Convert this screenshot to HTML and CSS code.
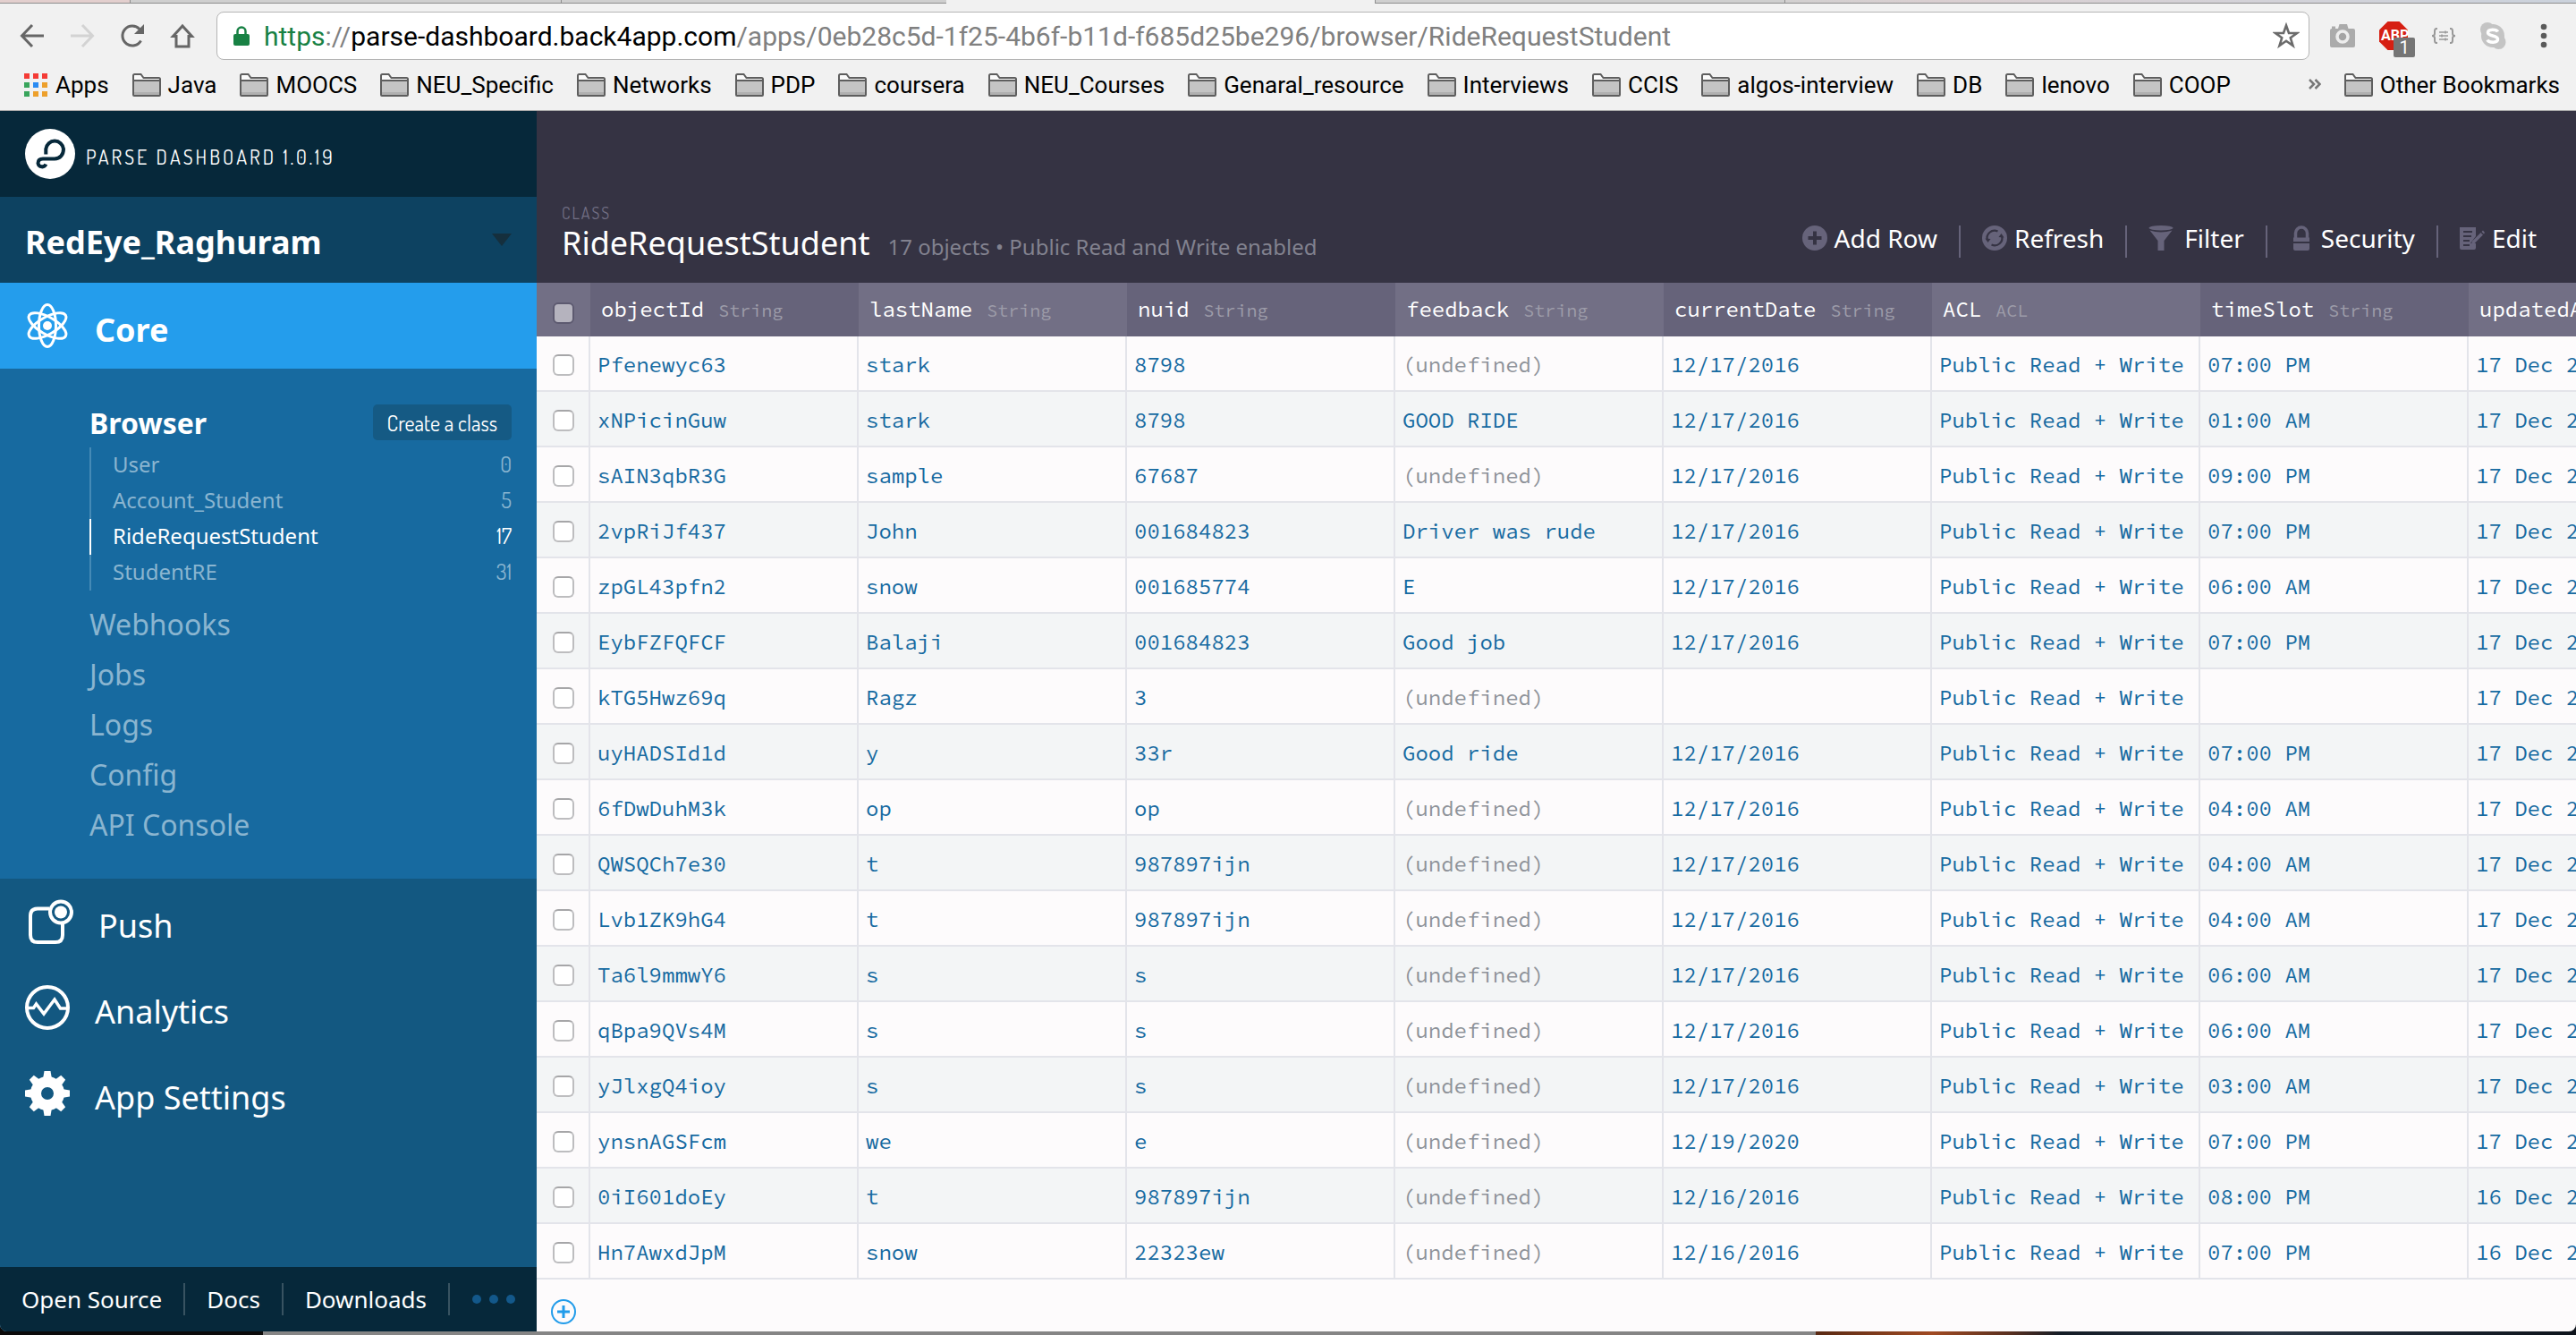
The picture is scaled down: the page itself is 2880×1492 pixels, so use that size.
FILE: index.html
```html
<!DOCTYPE html>
<html lang="en">
<head>
<meta charset="utf-8">
<title>Parse Dashboard</title>
<link rel="stylesheet" href="styles.css">
</head>
<body>
<svg width="0" height="0" class="defs" aria-hidden="true">
  <symbol id="folder" viewBox="0 0 32 26">
    <path d="M1 24V2.500Q1 1 2.500 1H9.500L12.500 5H29.500Q31 5 31 6.500V24Q31 25 30 25H2Q1 25 1 24Z" fill="#fafafa" stroke="#5e5e5e" stroke-width="2"/>
    <path d="M2 9H30V24H2Z" fill="#c4c4c4"/><path d="M2 21H30V24H2Z" fill="#b0b0b0"/>
    <path d="M1 8H31" stroke="#5e5e5e" stroke-width="2"/>
  </symbol>
</svg>
<div class="desktop">
<div class="window">
  <div class="tabs"><span class="tab-glass"></span><span class="tab"></span><span class="tab tab-second"></span><span class="tab-active"></span><span class="tab tab-last"></span><span class="tab-glass tab-rest"></span></div>
  <header class="chrome">
    <div class="toolbar">
      <div class="nav">
        <button class="icon-btn" aria-label="Back"><svg width="28" height="28" viewBox="0 0 28 28" fill="none" stroke="#666" stroke-width="3"><path d="M27 14H3M14 2L2.500 14L14 26"/></svg></button>
        <button class="icon-btn" aria-label="Forward"><svg width="28" height="28" viewBox="0 0 28 28" fill="none" stroke="#d3d3d3" stroke-width="3"><path d="M1 14H25M14 2L25.500 14L14 26"/></svg></button>
        <button class="icon-btn" aria-label="Reload"><svg width="28" height="28" viewBox="0 0 28 28"><path d="M23.500 19.500A11 11 0 1 1 22 6.500" fill="none" stroke="#666" stroke-width="3"/><path d="M27 1V12H16Z" fill="#666"/></svg></button>
        <button class="icon-btn" aria-label="Home"><svg width="28" height="28" viewBox="0 0 28 28" fill="none" stroke="#666" stroke-width="3"><path d="M14 3L3.500 14.500H7V26H21V14.500H24.500Z"/></svg></button>
      </div>
      <div class="address">
        <svg width="18" height="22" viewBox="0 0 18 22"><rect y="9" width="18" height="13" rx="2" fill="#188144"/><path d="M4.500 10V6a4.500 4.500 0 0 1 9 0v4" fill="none" stroke="#188144" stroke-width="2.500"/></svg>
        <div class="url" role="textbox" contenteditable="true" spellcheck="false" aria-label="Address"><span class="secure">https</span>://<span class="host">parse-dashboard.back4app.com</span>/apps/0eb28c5d-1f25-4b6f-b11d-f685d25be296/browser/RideRequestStudent</div>
        <button class="icon-btn" aria-label="Bookmark this page"><svg width="30" height="30" viewBox="0 0 30 30"><path d="M15 3.500L18 12H27L19.800 17.300L22.500 26L15 20.800L7.500 26L10.200 17.300L3 12H12Z" fill="none" stroke="#6b6b6b" stroke-width="2.600"/></svg></button>
      </div>
      <div class="extensions">
        <button class="icon-btn" aria-label="Screenshot"><svg width="30" height="28" viewBox="0 0 30 28"><path d="M1 8Q1 6 3 6V3.500H7V6H10L11.500 1H20L21.500 6H27Q29 6 29 8V25Q29 27 27 27H3Q1 27 1 25Z" fill="#ababab"/><circle cx="15" cy="15" r="6" fill="#a4a4a4" stroke="#ededed" stroke-width="3.500"/></svg></button>
        <button class="icon-btn abp" aria-label="Ad blocker"><svg width="32" height="32" viewBox="0 0 32 32"><path d="M9.500 0H22.500L32 9.500V22.500L22.500 32H9.500L0 22.500V9.500Z" fill="#d61f12"/></svg><span class="abp-name">ABP</span><span class="abp-badge">1</span></button>
        <button class="icon-btn" aria-label="JSON formatter"><svg width="28" height="18" viewBox="0 0 28 18" fill="none" stroke="#999"><path d="M7 1H6Q4 1 4 4V6.500Q4 9 1 9Q4 9 4 11.500V14Q4 17 6 17H7M21 1H22Q24 1 24 4V6.500Q24 9 27 9Q24 9 24 11.500V14Q24 17 22 17H21" stroke-width="2"/><path d="M9 5H19M9 9H19M9 13H19" stroke-width="1.500"/><path d="M16 3.500V6.500M12 7.500V10.500M16 11.500V14.500" stroke-width="1.500"/></svg></button>
        <button class="icon-btn skype" aria-label="Skype"><svg width="30" height="32" viewBox="0 0 30 32"><circle cx="15" cy="16" r="13" fill="#c4c4c4"/><circle cx="9" cy="9" r="8" fill="#c4c4c4"/><circle cx="21.500" cy="23" r="8" fill="#c4c4c4"/><path d="M20.500 11.500C19 8.500 9.500 8 9.500 12.500C9.500 17 20.500 15 20.500 19.800C20.500 24.500 10.500 24 9 20.500" fill="none" stroke="#fff" stroke-width="3.500"/></svg></button>
        <button class="icon-btn" aria-label="Menu"><svg width="8" height="28" viewBox="0 0 8 28" fill="#5a5a5a"><circle cx="4" cy="4" r="3.300"/><circle cx="4" cy="14" r="3.300"/><circle cx="4" cy="24" r="3.300"/></svg></button>
      </div>
    </div>
    <nav class="bookmarks" aria-label="Bookmarks">
      <a href="#"><svg width="28" height="26" viewBox="0 0 28 26"><path d="M1 0h6v6h-6zM11 0h6v6h-6zM21 0h6v6h-6z" fill="#f43b35"/><path d="M1 10h6v6h-6zM1 20h6v6h-6z" fill="#39a55c"/><path d="M11 10h6v6h-6z" fill="#2a8bf2"/><path d="M21 10h6v6h-6zM11 20h6v6h-6zM21 20h6v6h-6z" fill="#eda02c"/></svg>Apps</a>
      <a href="#"><svg class="folder"><use href="#folder"/></svg>Java</a>
      <a href="#"><svg class="folder"><use href="#folder"/></svg>MOOCS</a>
      <a href="#"><svg class="folder"><use href="#folder"/></svg>NEU_Specific</a>
      <a href="#"><svg class="folder"><use href="#folder"/></svg>Networks</a>
      <a href="#"><svg class="folder"><use href="#folder"/></svg>PDP</a>
      <a href="#"><svg class="folder"><use href="#folder"/></svg>coursera</a>
      <a href="#"><svg class="folder"><use href="#folder"/></svg>NEU_Courses</a>
      <a href="#"><svg class="folder"><use href="#folder"/></svg>Genaral_resource</a>
      <a href="#"><svg class="folder"><use href="#folder"/></svg>Interviews</a>
      <a href="#"><svg class="folder"><use href="#folder"/></svg>CCIS</a>
      <a href="#"><svg class="folder"><use href="#folder"/></svg>algos-interview</a>
      <a href="#"><svg class="folder"><use href="#folder"/></svg>DB</a>
      <a href="#"><svg class="folder"><use href="#folder"/></svg>lenovo</a>
      <a href="#"><svg class="folder"><use href="#folder"/></svg>COOP</a>
      <button class="icon-btn more-bookmarks" aria-label="More bookmarks"><svg width="14" height="14" viewBox="0 0 14 14" fill="none" stroke="#777" stroke-width="2.500"><path d="M1 2L6 7L1 12M7.500 2L12.500 7L7.500 12"/></svg></button>
      <a href="#"><svg class="folder"><use href="#folder"/></svg>Other Bookmarks</a>
    </nav>
  </header>

  <div class="app">
    <aside class="sidebar">
      <div class="brand">
        <svg width="56" height="56" viewBox="0 0 56 56"><circle cx="28" cy="28" r="28" fill="#fff"/><path d="M23.300 28.500V22.500A9.900 9.900 0 0 1 43 22.500C43 29 39 33.500 33 33.500H20Q14.500 33.500 14.500 38.500A4.600 4.600 0 0 0 23.300 39.500" fill="none" stroke="#06283a" stroke-width="4"/></svg>
        <span>PARSE DASHBOARD 1.0.19</span>
      </div>
      <button class="app-name"><span>RedEye_Raghuram</span><svg width="22" height="14" viewBox="0 0 22 14"><path d="M0 0H22L11 14Z" fill="#152f3d"/></svg></button>
      <a class="section section-active" href="#">
        <svg width="50" height="50" viewBox="0 0 50 50" fill="none" stroke="#fff" stroke-width="3"><ellipse cx="25" cy="25" rx="9.500" ry="23.500"/><ellipse cx="25" cy="25" rx="9.500" ry="23.500" transform="rotate(60 25 25)"/><ellipse cx="25" cy="25" rx="9.500" ry="23.500" transform="rotate(120 25 25)"/><circle cx="25" cy="25" r="5" fill="#fff" stroke="none"/></svg>
        <span>Core</span></a>
      <div class="submenu">
        <div class="submenu-head"><a href="#">Browser</a><button class="create">Create a class</button></div>
        <ul class="classes">
          <li><a href="#">User</a><span>0</span></li>
          <li><a href="#">Account_Student</a><span>5</span></li>
          <li class="current"><a href="#">RideRequestStudent</a><span>17</span></li>
          <li><a href="#">StudentRE</a><span>31</span></li>
        </ul>
        <a class="sub-link" href="#">Webhooks</a>
        <a class="sub-link" href="#">Jobs</a>
        <a class="sub-link" href="#">Logs</a>
        <a class="sub-link" href="#">Config</a>
        <a class="sub-link" href="#">API Console</a>
      </div>
      <a class="section" href="#">
        <svg width="54" height="50" viewBox="0 0 54 50" fill="none" stroke="#fff"><path d="M27 10.500H14Q6 10.500 6 18.500V40Q6 48 14 48H34Q42 48 42 40V27" stroke-width="4"/><circle cx="40" cy="14.500" r="12" stroke-width="4"/><circle cx="40" cy="14.500" r="7" fill="#fff" stroke="none"/></svg>
        <span>Push</span></a>
      <a class="section" href="#">
        <svg width="50" height="50" viewBox="0 0 50 50" fill="none" stroke="#fff"><circle cx="25" cy="25" r="23" stroke-width="4"/><path d="M2 25.500H9.500L12.500 21L21 32L33 16L39.500 26H48" stroke-width="3.500"/></svg>
        <span>Analytics</span></a>
      <a class="section" href="#">
        <svg width="50" height="50" viewBox="0 0 50 50"><g fill="#fff"><path id="tooth" d="M21.500 0H28.500L30 9H20Z"/><use href="#tooth" transform="rotate(45 25 25)"/><use href="#tooth" transform="rotate(90 25 25)"/><use href="#tooth" transform="rotate(135 25 25)"/><use href="#tooth" transform="rotate(180 25 25)"/><use href="#tooth" transform="rotate(225 25 25)"/><use href="#tooth" transform="rotate(270 25 25)"/><use href="#tooth" transform="rotate(315 25 25)"/></g><circle cx="25" cy="25" r="13" fill="none" stroke="#fff" stroke-width="12"/></svg>
        <span>App Settings</span></a>
      <footer class="side-footer">
        <a href="#">Open Source</a><a href="#">Docs</a><a href="#">Downloads</a>
        <button class="icon-btn" aria-label="More"><svg width="50" height="12" viewBox="0 0 50 12" fill="#13588a"><circle cx="6" cy="6" r="5"/><circle cx="25" cy="6" r="5"/><circle cx="44" cy="6" r="5"/></svg></button>
      </footer>
    </aside>

    <main class="content">
      <div class="class-header">
        <div class="class-title">
          <div class="eyebrow">CLASS</div>
          <div class="title-line"><h1>RideRequestStudent</h1><span>17 objects • Public Read and Write enabled</span></div>
        </div>
        <div class="actions">
          <button><svg width="28" height="28" viewBox="0 0 28 28"><circle cx="14" cy="14" r="14" fill="#66637a"/><path d="M14 6.500V21.500M6.500 14H21.500" stroke="#353343" stroke-width="4"/></svg>Add Row</button>
          <button><svg width="28" height="28" viewBox="0 0 28 28"><circle cx="14" cy="14" r="14" fill="#66637a"/><path d="M6 16.500A8.300 8.300 0 0 1 17.500 6.500M22 11.500A8.300 8.300 0 0 1 10.500 21.500" fill="none" stroke="#353343" stroke-width="2.200"/><path d="M3.500 14.500L9.500 15L6.500 19ZM24.500 13.500L18.500 13L21.500 9Z" fill="#353343"/></svg>Refresh</button>
          <button><svg width="32" height="28" viewBox="0 0 32 28" fill="#66637a"><ellipse cx="14" cy="2.800" rx="13.500" ry="2.800"/><path d="M1.500 5.500Q14 9.500 26.500 5.500L17.500 17V28H10.500V17Z"/></svg>Filter</button>
          <button><svg width="28" height="28" viewBox="0 0 28 28" fill="#66637a"><path d="M7.500 14V8.500a6.500 6.500 0 0 1 13 0V14" fill="none" stroke="#66637a" stroke-width="3.500"/><path d="M5 13.500H23V18H5ZM5 20H23V26Q23 28 21 28H7Q5 28 5 26Z"/></svg>Security</button>
          <button><svg width="28" height="28" viewBox="0 0 28 28"><path d="M0 2H18V12L12 20H18V25Q18 27 16 27H2Q0 27 0 25Z" fill="#66637a"/><path d="M4 7H14M4 12H13M4 17H11M4 22H11" stroke="#353343" stroke-width="1.800"/><path d="M13 21L14 17.500L23.500 8L26 10.500L16.500 20ZM24.500 7L26 5.500L28 8L27 9.500Z" fill="#66637a"/></svg>Edit</button>
        </div>
      </div>
      <table class="data">
        <thead><tr><th class="pick"><input type="checkbox" aria-label="Select all rows"></th><th scope="col">objectId<small>String</small></th><th scope="col">lastName<small>String</small></th><th scope="col">nuid<small>String</small></th><th scope="col">feedback<small>String</small></th><th scope="col">currentDate<small>String</small></th><th scope="col">ACL<small>ACL</small></th><th scope="col">timeSlot<small>String</small></th><th scope="col">updatedAt</th></tr></thead>
        <tbody>
          <tr><td class="pick"><input type="checkbox" aria-label="Select Pfenewyc63"></td><td>Pfenewyc63</td><td>stark</td><td>8798</td><td class="none">(undefined)</td><td>12/17/2016</td><td>Public Read + Write</td><td>07:00 PM</td><td>17 Dec 2016</td></tr>
          <tr><td class="pick"><input type="checkbox" aria-label="Select xNPicinGuw"></td><td>xNPicinGuw</td><td>stark</td><td>8798</td><td>GOOD RIDE</td><td>12/17/2016</td><td>Public Read + Write</td><td>01:00 AM</td><td>17 Dec 2016</td></tr>
          <tr><td class="pick"><input type="checkbox" aria-label="Select sAIN3qbR3G"></td><td>sAIN3qbR3G</td><td>sample</td><td>67687</td><td class="none">(undefined)</td><td>12/17/2016</td><td>Public Read + Write</td><td>09:00 PM</td><td>17 Dec 2016</td></tr>
          <tr><td class="pick"><input type="checkbox" aria-label="Select 2vpRiJf437"></td><td>2vpRiJf437</td><td>John</td><td>001684823</td><td>Driver was rude</td><td>12/17/2016</td><td>Public Read + Write</td><td>07:00 PM</td><td>17 Dec 2016</td></tr>
          <tr><td class="pick"><input type="checkbox" aria-label="Select zpGL43pfn2"></td><td>zpGL43pfn2</td><td>snow</td><td>001685774</td><td>E</td><td>12/17/2016</td><td>Public Read + Write</td><td>06:00 AM</td><td>17 Dec 2016</td></tr>
          <tr><td class="pick"><input type="checkbox" aria-label="Select EybFZFQFCF"></td><td>EybFZFQFCF</td><td>Balaji</td><td>001684823</td><td>Good job</td><td>12/17/2016</td><td>Public Read + Write</td><td>07:00 PM</td><td>17 Dec 2016</td></tr>
          <tr><td class="pick"><input type="checkbox" aria-label="Select kTG5Hwz69q"></td><td>kTG5Hwz69q</td><td>Ragz</td><td>3</td><td class="none">(undefined)</td><td></td><td>Public Read + Write</td><td></td><td>17 Dec 2016</td></tr>
          <tr><td class="pick"><input type="checkbox" aria-label="Select uyHADSId1d"></td><td>uyHADSId1d</td><td>y</td><td>33r</td><td>Good ride</td><td>12/17/2016</td><td>Public Read + Write</td><td>07:00 PM</td><td>17 Dec 2016</td></tr>
          <tr><td class="pick"><input type="checkbox" aria-label="Select 6fDwDuhM3k"></td><td>6fDwDuhM3k</td><td>op</td><td>op</td><td class="none">(undefined)</td><td>12/17/2016</td><td>Public Read + Write</td><td>04:00 AM</td><td>17 Dec 2016</td></tr>
          <tr><td class="pick"><input type="checkbox" aria-label="Select QWSQCh7e30"></td><td>QWSQCh7e30</td><td>t</td><td>987897ijn</td><td class="none">(undefined)</td><td>12/17/2016</td><td>Public Read + Write</td><td>04:00 AM</td><td>17 Dec 2016</td></tr>
          <tr><td class="pick"><input type="checkbox" aria-label="Select Lvb1ZK9hG4"></td><td>Lvb1ZK9hG4</td><td>t</td><td>987897ijn</td><td class="none">(undefined)</td><td>12/17/2016</td><td>Public Read + Write</td><td>04:00 AM</td><td>17 Dec 2016</td></tr>
          <tr><td class="pick"><input type="checkbox" aria-label="Select Ta6l9mmwY6"></td><td>Ta6l9mmwY6</td><td>s</td><td>s</td><td class="none">(undefined)</td><td>12/17/2016</td><td>Public Read + Write</td><td>06:00 AM</td><td>17 Dec 2016</td></tr>
          <tr><td class="pick"><input type="checkbox" aria-label="Select qBpa9QVs4M"></td><td>qBpa9QVs4M</td><td>s</td><td>s</td><td class="none">(undefined)</td><td>12/17/2016</td><td>Public Read + Write</td><td>06:00 AM</td><td>17 Dec 2016</td></tr>
          <tr><td class="pick"><input type="checkbox" aria-label="Select yJlxgQ4ioy"></td><td>yJlxgQ4ioy</td><td>s</td><td>s</td><td class="none">(undefined)</td><td>12/17/2016</td><td>Public Read + Write</td><td>03:00 AM</td><td>17 Dec 2016</td></tr>
          <tr><td class="pick"><input type="checkbox" aria-label="Select ynsnAGSFcm"></td><td>ynsnAGSFcm</td><td>we</td><td>e</td><td class="none">(undefined)</td><td>12/19/2020</td><td>Public Read + Write</td><td>07:00 PM</td><td>17 Dec 2016</td></tr>
          <tr><td class="pick"><input type="checkbox" aria-label="Select 0iI601doEy"></td><td>0iI601doEy</td><td>t</td><td>987897ijn</td><td class="none">(undefined)</td><td>12/16/2016</td><td>Public Read + Write</td><td>08:00 PM</td><td>16 Dec 2016</td></tr>
          <tr><td class="pick"><input type="checkbox" aria-label="Select Hn7AwxdJpM"></td><td>Hn7AwxdJpM</td><td>snow</td><td>22323ew</td><td class="none">(undefined)</td><td>12/16/2016</td><td>Public Read + Write</td><td>07:00 PM</td><td>16 Dec 2016</td></tr>
        </tbody>
      </table>
      <button class="icon-btn add-row" aria-label="Add a row"><svg width="28" height="28" viewBox="0 0 28 28" fill="none" stroke="#229cea"><circle cx="14" cy="14" r="13" stroke-width="2"/><path d="M14 7V21M7 14H21" stroke-width="3"/></svg></button>
    </main>
  </div>
</div>
</div>
</body>
</html>
```
FILE: styles.css
```css
* { box-sizing: border-box; }

body {
  margin: 0;
  font-family: "Noto Sans", "Open Sans", sans-serif;
  font-size: 24px;
}

a { color: inherit; text-decoration: none; }

button {
  border: 0;
  padding: 0;
  background: none;
  color: inherit;
  font: inherit;
  cursor: pointer;
}

svg { display: block; flex: none; }
.defs { position: absolute; }
.icon-btn { display: flex; flex: none; }

/* Desktop strip under the browser window */
.desktop {
  display: flex;
  flex-direction: column;
  min-height: 100vh;
  padding-bottom: 4px;
  background: linear-gradient(90deg, #0c0b0b 0 10.200%, #858585 10.200% 70.500%, #5a2a14 70.500%, #a04a22 75%, #5a3020 78%, #141c26 80%, #2a3644 88%, #0e141c);
}

.window {
  display: flex;
  flex: 1;
  flex-direction: column;
  overflow: hidden;
  border-radius: 0 0 8px 8px;
  background: #fdfbfc;
}

/* Browser chrome */
.tabs { display: flex; height: 4px; background: #f1f1f1; }
.tab, .tab-glass { border-bottom: 1px solid #8f8f8f; }
.tab { flex: 482; border-left: 1px solid #8f8f8f; background: #cfcfcf; }
.tab-second { flex: 430; }
.tab-active { flex: 480; }
.tab-last { flex: 457; }
.tab-glass { flex: 145; background: #e3cfce; }
.tab-rest { flex: 885; border-left: 1px solid #8f8f8f; background: linear-gradient(90deg, #d2d0d0, #dacfd1 20%, #d3d2d8 60%, #cbd2dc); }

.chrome {
  height: 120px;
  padding-top: 9px;
  border-bottom: 1px solid #aaa;
  background: #f1f1f1;
  color: #000;
  font-family: Roboto, "Liberation Sans", sans-serif;
  font-size: 26px;
}

.toolbar { display: flex; align-items: center; padding: 0 32px 0 22px; }
.nav { display: flex; gap: 28px; margin-right: 24px; }

.address {
  display: flex;
  flex: 1;
  align-items: center;
  height: 54px;
  padding: 0 10px 0 18px;
  border: 1px solid #b5b5b5;
  border-radius: 8px;
  background: #fff;
}

.url { flex: 1; margin-left: 16px; padding-top: 2px; color: #808080; font-size: 30px; line-height: 48px; white-space: nowrap; }
.secure { color: #188144; }
.host { color: #000; }

.extensions { display: flex; align-items: center; gap: 26px; margin-left: 22px; }
.extensions .skype { margin-right: 12px; }
.abp { position: relative; }
.abp-name { position: absolute; top: 7px; left: 2px; color: #fff; font-size: 16px; font-weight: 700; line-height: 18px; }
.abp-badge { position: absolute; top: 18px; left: 16px; width: 24px; height: 22px; border-radius: 2px; background: #757575; color: #fff; font-size: 20px; line-height: 22px; text-align: center; }

.bookmarks { display: flex; align-items: center; gap: 26px; height: 54px; padding: 0 18px 0 26px; }
.bookmarks a { display: flex; align-items: center; gap: 8px; padding-top: 1px; line-height: 34px; white-space: nowrap; }
.folder { width: 32px; height: 26px; }
.more-bookmarks { margin-left: auto; }

/* App frame */
.app { display: flex; flex: 1; }

.sidebar {
  display: flex;
  flex: none;
  flex-direction: column;
  width: 600px;
  background: #135881;
  color: #fff;
}

.brand {
  display: flex;
  align-items: center;
  gap: 12px;
  height: 96px;
  padding-left: 28px;
  background: #06283a;
  font-family: Dosis, "Open Sans", sans-serif;
  font-size: 22px;
  letter-spacing: 3px;
}

.brand span { padding-top: 6px; }

.app-name {
  display: flex;
  align-items: center;
  justify-content: space-between;
  height: 96px;
  padding: 0 28px;
  background: #0d4261;
  font-size: 36px;
  font-weight: 700;
}

.app-name span { padding-top: 4px; }

.section { display: flex; align-items: center; gap: 28px; height: 96px; padding-left: 28px; font-size: 36px; }
.section span { padding-top: 8px; }
.section-active { background: #249dec; font-weight: 700; }

.submenu { padding: 32px 28px 32px 100px; background: #176aa0; }
.submenu-head { display: flex; align-items: center; justify-content: space-between; height: 56px; font-size: 32px; font-weight: 700; }
.create { height: 40px; padding: 0 16px; border-radius: 5px; background: #155a84; font-family: Dosis, "Open Sans", sans-serif; font-size: 24px; font-weight: 400; }

.classes { margin: 0 0 10px; padding: 0; list-style: none; color: #8ab5d0; }
.classes li { display: flex; align-items: center; justify-content: space-between; height: 40px; padding: 0 0 4px 24px; border-left: 2px solid #458ab6; }
.classes span { font-family: Dosis, "Open Sans", sans-serif; }
.classes .current { border-color: #fff; color: #fff; }

.sub-link { display: block; color: #8ab5d0; font-size: 32px; line-height: 56px; }

.side-footer { display: flex; align-items: center; height: 72px; margin-top: auto; background: #06283a; font-size: 26px; line-height: 36px; }
.side-footer a { padding: 0 24px; border-right: 2px solid #385361; }
.side-footer button { margin-left: 24px; }

/* Class browser */
.content { flex: 1; min-width: 0; overflow: hidden; }

.class-header {
  display: flex;
  align-items: flex-end;
  justify-content: space-between;
  height: 192px;
  padding: 0 44px 20px 28px;
  background: #353343;
  color: #fff;
}

.eyebrow { color: #726f85; font-family: Dosis, "Open Sans", sans-serif; font-size: 18px; letter-spacing: 2px; line-height: 28px; }
.title-line { display: flex; align-items: baseline; gap: 20px; line-height: 40px; }
.title-line h1 { margin: 0; font-size: 36px; font-weight: 400; }
.title-line span { color: #82828f; }

.actions { display: flex; margin-bottom: 8px; font-size: 28px; line-height: 28px; }
.actions button { display: flex; gap: 8px; height: 36px; padding: 0 24px; border-left: 2px solid #66637a; }
.actions button:first-child { border-left: 0; }
.actions button:last-child { padding-right: 0; }

.data {
  width: 2460px;
  border-spacing: 0;
  table-layout: fixed;
  color: #166aa1;
  font-family: "Source Code Pro", "Liberation Mono", monospace;
  font-size: 24px;
}

.data th, .data td { overflow: hidden; text-align: left; white-space: nowrap; }
.data th { height: 60px; padding: 0 12px 2px; background: #726f85; color: #fff; font-weight: 400; }
.data th:nth-child(even) { background: #66637a; }
.data small { margin-left: 16px; color: #9d9ca9; font-size: 20px; }
.data td { height: 62px; padding: 2px 8px 0; border-right: 2px solid #e3e4ea; border-bottom: 2px solid #e3e4ea; }
.data tbody tr:nth-child(even) { background: #f3f5f6; }
.data .none { color: #8e9299; }
.data .pick { width: 60px; padding: 4px 0 0 18px; }
.data th.pick { padding-top: 8px; }

.data input {
  display: block;
  width: 24px;
  height: 24px;
  margin: 0;
  border: 2px solid #bdbdbf;
  border-top-color: #a6a6a8;
  border-radius: 6px;
  appearance: none;
  background: #fff;
}

.data th input { border-color: #5d5a70; background: #b5b3be; }

.add-row { margin: 22px 16px 8px; }
```
